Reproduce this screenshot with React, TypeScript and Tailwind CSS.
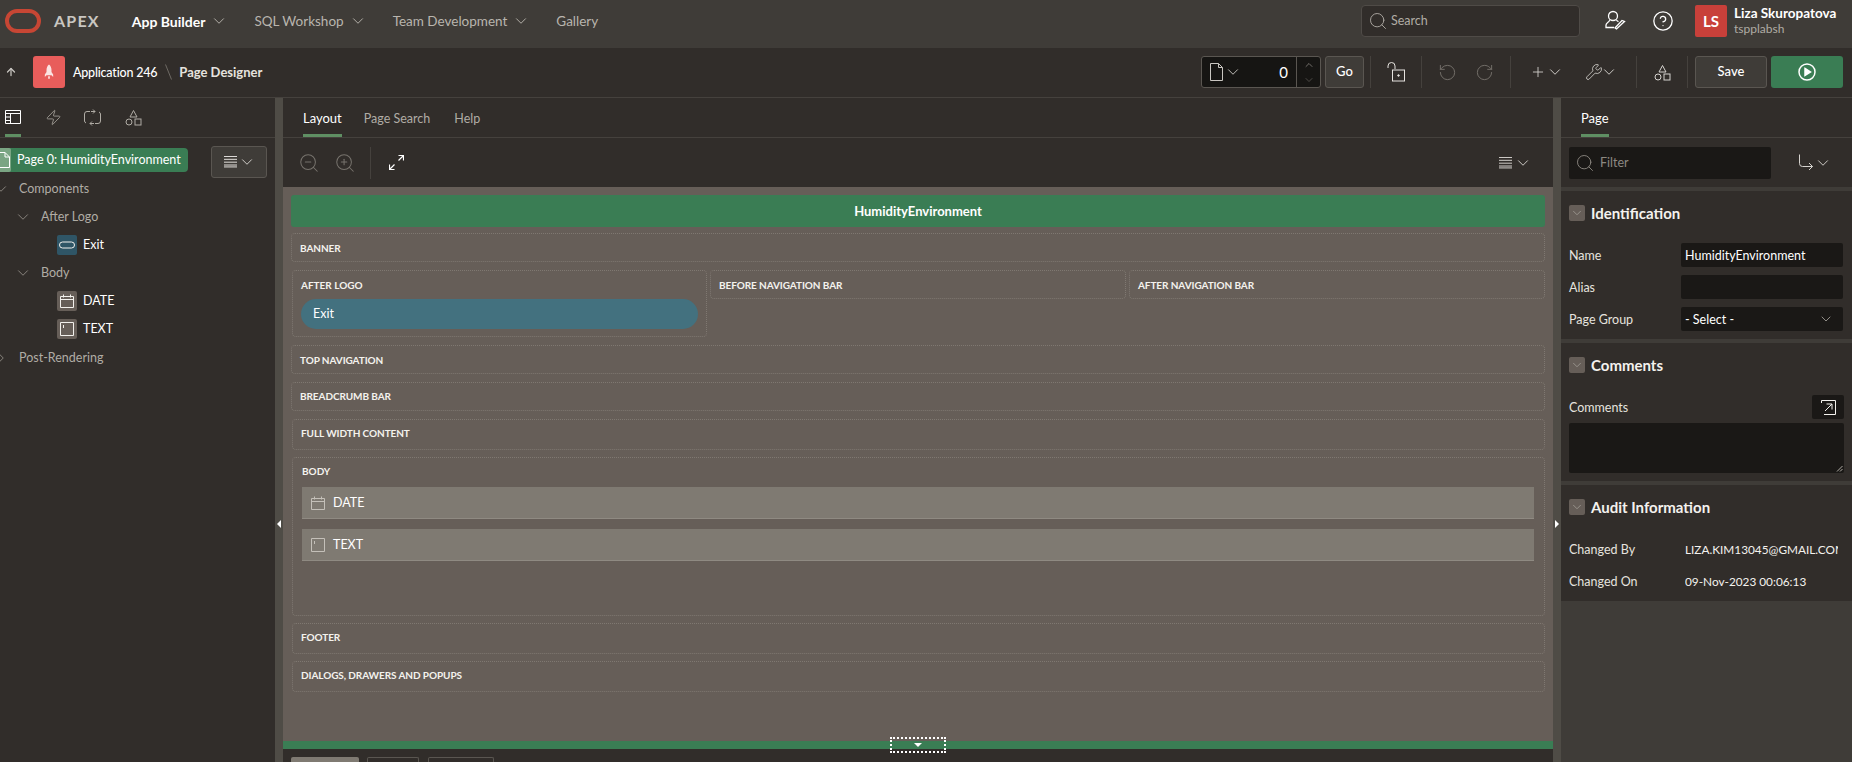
import {
  ChevronDown,
  ChevronUp,
  ArrowUp,
  Search,
  Zap,
  RotateCcw,
  RotateCw,
  Plus,
  Wrench,
  ZoomIn,
  ZoomOut,
  CircleHelp,
} from "lucide-react";

function Chevron({ className = "text-[#d6d3cf]", size = 18 }: { className?: string; size?: number }) {
  return <ChevronDown size={size} strokeWidth={1.25} className={className} />;
}

function MenuLines({ className = "" }: { className?: string }) {
  return (
    <svg width="15" height="12" viewBox="0 0 15 12" className={className} stroke="currentColor" fill="none">
      <path d="M1 .5h13M1 3.500h13M1 6.500h13M1 9.500h13M1 11.500h13" transform="scale(1 .95)" />
    </svg>
  );
}

function ShapesIcon({ className = "" }: { className?: string }) {
  return (
    <svg width="17" height="17" viewBox="0 0 17 17" fill="none" stroke="currentColor" className={className}>
      <path d="M8.500 1.500 12 8H5z" />
      <circle cx="4" cy="13" r="3" />
      <rect x="10" y="10" width="6" height="6" />
    </svg>
  );
}

function NavItem({ label, active, chevron = true, className = "" }: { label: string; active?: boolean; chevron?: boolean; className?: string }) {
  return (
    <div className={`flex items-center gap-[5px] ${active ? "text-[14px] font-bold text-white" : "text-[13.5px] text-[#b9b5ae]"} ${className}`}>
      <span>{label}</span>
      {chevron && <Chevron className="text-[#b9b5ae]" />}
    </div>
  );
}

function TabItem({ label, active, className = "" }: { label: string; active?: boolean; className?: string }) {
  return (
    <div className={`flex h-full items-center border-b-[3px] ${active ? "border-[#5f8f63] pt-[5px] text-[13px] text-white" : "border-transparent pt-[6px] text-[12.5px] text-[#b0aca5]"} ${className}`}>
      {label}
    </div>
  );
}

function Divider({ className = "" }: { className?: string }) {
  return <div className={`h-8 w-px bg-[#45413d] ${className}`} />;
}

function TopBar() {
  return (
    <header className="flex h-12 shrink-0 items-center bg-[#3f3c38] pb-[6px]">
      <svg width="36" height="24" viewBox="0 0 36 24" fill="none" className="ml-[5px]">
        <rect x="2" y="2" width="32" height="20" rx="10" stroke="#c74634" strokeWidth="4" />
      </svg>
      <span className="ml-[13px] text-[16px] font-bold tracking-[1.2px] text-[#c9c6c1]">APEX</span>
      <NavItem label="App Builder" active className="ml-[32px]" />
      <NavItem label="SQL Workshop" className="ml-[26px]" />
      <NavItem label="Team Development" className="ml-[26px]" />
      <NavItem label="Gallery" chevron={false} className="ml-[26px]" />
      <div className="ml-auto flex h-8 w-[219px] items-center gap-[3px] rounded-[4px] border border-[#4f4b47] bg-[#312d2a] pl-[6px] text-[12.5px] text-[#b0aca5]">
        <Search size={20} strokeWidth={1.1} />
        <span className="pt-[1px]">Search</span>
      </div>
      <svg width="22" height="22" viewBox="0 0 22 22" fill="none" stroke="#fff" strokeWidth="1.3" className="ml-[24px]">
        <circle cx="9" cy="6" r="4.500" />
        <path d="M5.500 10c.5 2-3.500 2.500-3.500 5v2.500h8M12.500 10c.3.8 1 1.200 2 1.600" />
        <path d="M20.500 11.500l-8 7.500-1.500-1 7-7.500z" />
      </svg>
      <CircleHelp size={22} strokeWidth={1.4} className="ml-[26px] text-white" />
      <div className="ml-[21px] flex h-8 w-8 items-center justify-center rounded-[2px] bg-[#c8403a] text-[15px] font-bold text-white">LS</div>
      <div className="ml-[7px] mr-[15px] flex w-[103px] flex-col leading-[16px]">
        <span className="text-[13.5px] font-bold whitespace-nowrap text-white">Liza Skuropatova</span>
        <span className="text-[12px] text-[#b0aca5]">tspplabsh</span>
      </div>
    </header>
  );
}

function SecondBar() {
  return (
    <div className="flex h-[50px] shrink-0 items-center border-b border-[#45413d] bg-[#312d2a] pb-[1px]">
      <ArrowUp size={12} strokeWidth={2.5} className="ml-[5px] text-[#c9c6c1]" />
      <div className="ml-[16px] flex h-8 w-8 items-center justify-center rounded-[3px] bg-[#e85d5b]">
        <svg width="10" height="16" viewBox="0 0 12 18" fill="#fbe3e2">
          <path d="M6 0c2 1.500 3 4 3 7v6H3V7c0-3 1-5.500 3-7zM3 9l-2 3v3l2-2zM9 9l2 3v3l-2-2zM5 14h2v3H5z" />
        </svg>
      </div>
      <span className="ml-2 pt-[2px] text-[12.5px] font-medium tracking-[-0.2px] text-white">Application 246</span>
      <svg width="7" height="16" viewBox="0 0 7 16" stroke="#6e6a65" className="ml-2">
        <path d="M.5.500l6 15" />
      </svg>
      <span className="ml-[7px] pt-[2px] text-[13px] font-bold text-[#e6e3df]">Page Designer</span>

      <div className="ml-auto flex items-center">
        <div className="flex h-8 w-[120px] items-center rounded-[3px] border border-[#5a5651] bg-[#161513] text-white">
          <svg width="13" height="18" viewBox="0 0 13 18" fill="none" stroke="#c9c6c1" className="ml-2">
            <path d="M.5.500h8l4 4v13H.5zM8.500.500v4h4" />
          </svg>
          <Chevron className="ml-px text-[#c9c6c1]" />
          <span className="ml-auto mr-[8px] text-[15px]">0</span>
          <div className="flex h-full w-[24px] flex-col items-center justify-center gap-[3px] border-l border-[#5a5651]">
            <ChevronUp size={12} strokeWidth={1.25} className="text-[#a8a49d]" />
            <ChevronDown size={12} strokeWidth={1.25} className="text-[#6e6a65]" />
          </div>
        </div>
        <div className="ml-1 flex h-8 w-[39px] items-center justify-center rounded-[3px] border border-[#5a5651] bg-[#3f3c38] text-[13px] font-medium text-white">Go</div>
        <Divider className="ml-[6px]" />
        <svg width="18" height="20" viewBox="0 0 18 20" fill="none" stroke="#e6e3df" className="ml-[16px]">
          <path d="M1 6V4a3.500 3.500 0 0 1 7 0v3" />
          <rect x="5.500" y="8" width="12" height="11" />
          <circle cx="11.500" cy="13.500" r=".8" fill="#e6e3df" />
        </svg>
        <Divider className="ml-[16px]" />
        <RotateCcw size={19} strokeWidth={1.1} className="ml-[16px] text-[#7b7771]" />
        <RotateCw size={19} strokeWidth={1.1} className="ml-[18px] text-[#7b7771]" />
        <Divider className="ml-[16px]" />
        <Plus size={16} strokeWidth={1.3} className="ml-[19px] text-[#d6d3cf]" />
        <Chevron />
        <Wrench size={18} strokeWidth={1.1} className="ml-[21px] text-[#d6d3cf]" />
        <Chevron className="-ml-[3px] text-[#d6d3cf]" />
        <Divider className="ml-[18px]" />
        <ShapesIcon className="ml-[17px] text-[#d6d3cf]" />
        <Divider className="ml-[16px]" />
        <div className="ml-[7px] flex h-8 w-[72px] items-center justify-center rounded-[3px] border border-[#5a5651] bg-[#3f3c38] text-[13px] font-medium text-white">Save</div>
        <div className="ml-1 mr-[9px] flex h-8 w-[72px] items-center justify-center rounded-[3px] bg-[#3a7d54]">
          <svg width="18" height="18" viewBox="0 0 18 18" fill="none" stroke="#fff" strokeWidth="1.5">
            <circle cx="9" cy="9" r="8" />
            <path d="M7 5.500 12.500 9 7 12.500z" fill="#fff" />
          </svg>
        </div>
      </div>
    </div>
  );
}

function TreeRow({ label, indent, top, chevron, icon, strong }: { label: string; indent: number; top: number; chevron?: "down" | "right"; icon?: React.ReactNode; strong?: boolean }) {
  return (
    <div className="relative flex h-6 items-center" style={{ marginTop: top, paddingLeft: indent }}>
      {chevron && (
        <span className="absolute top-[3px]" style={{ left: indent - 27.5 }}>
          <Chevron className={`text-[#8d8982] ${chevron === "right" ? "-rotate-90" : ""}`} />
        </span>
      )}
      {icon}
      <span className={`text-[12.5px] ${strong ? "text-white" : "text-[#b0aca5]"} ${icon ? "ml-[6px]" : ""}`}>{label}</span>
    </div>
  );
}

function TreeIcon({ bg, children }: { bg: string; children: React.ReactNode }) {
  return (
    <span className={`flex h-5 w-5 items-center justify-center rounded-[2px] ${bg}`}>
      <svg width="16" height="16" viewBox="0 0 16 16" fill="none" stroke="#f2f0ec">
        {children}
      </svg>
    </span>
  );
}

function CalendarPaths() {
  return <path d="M1.500 3.500h13v11h-13zM1.500 6.500h13M4.500 1.500v3M11.500 1.500v3" />;
}

function TextPaths() {
  return <path d="M1.500 1.500h13v13h-13zM4.500 4v3" />;
}

function LeftPanel() {
  return (
    <aside className="flex w-[275px] shrink-0 flex-col bg-[#312d2a]">
      <div className="flex h-10 shrink-0 items-end border-b border-[#45413d]">
        <div className="ml-[5px] flex h-full w-4 items-center border-b-[3px] border-[#5f8f63] pt-[2px]">
          <svg width="16" height="14" viewBox="0 0 16 14" fill="none" stroke="#fff">
            <path d="M.5.500h15v13H.5zM.5 3.500h15M5.500 3.500v10M.5 7h5M.5 10.500h5" />
          </svg>
        </div>
        <div className="ml-[24px] flex h-full items-center">
          <Zap size={17} strokeWidth={1.1} className="text-[#b0aca5]" />
        </div>
        <div className="ml-[22px] flex h-full items-center">
          <svg width="17" height="17" viewBox="0 0 17 17" fill="none" stroke="#b0aca5">
            <path d="M6 2.500H3a2.500 2.500 0 0 0-2.500 2.500v7A2.500 2.500 0 0 0 2 14" />
            <path d="M11 14.500h3a2.500 2.500 0 0 0 2.500-2.500V5A2.500 2.500 0 0 0 15 3" />
            <path d="M9 .5 11 2.500 9 4.500M8 12.500 6 14.500 8 16.500" />
            <path d="M11 2.500H7M6 14.500h4" />
          </svg>
        </div>
        <div className="ml-6 flex h-full items-center">
          <ShapesIcon className="text-[#b0aca5]" />
        </div>
      </div>
      <div className="flex items-start pt-2">
        <div className="mt-[2px] flex h-6 w-[188px] items-center rounded-r-[4px] bg-[#3a7d54]">
          <span className="flex h-full w-[11px] items-center justify-end overflow-hidden rounded-r-[2px] bg-[#7aa583]">
            <svg width="11" height="16" viewBox="6 0 11 16" fill="none" stroke="#fff" className="shrink-0">
              <path d="M2 .5h9l4.500 4.500v10.500H2zM11 .5V5h4.500" />
            </svg>
          </span>
          <span className="ml-[6px] text-[12.5px] text-white">Page 0: HumidityEnvironment</span>
        </div>
        <div className="ml-[23px] flex h-8 w-[56px] items-center justify-center rounded-[3px] border border-[#5a5651] bg-[#3f3c38] text-[#e6e3df]">
          <MenuLines />
          <Chevron />
        </div>
      </div>
      <TreeRow label="Components" indent={19} top={-1} chevron="down" />
      <TreeRow label="After Logo" indent={41} top={4} chevron="down" />
      <TreeRow
        label="Exit"
        indent={57}
        top={4}
        strong
        icon={
          <TreeIcon bg="bg-[#2f5566]">
            <rect x=".5" y="5" width="15" height="6" rx="3" />
          </TreeIcon>
        }
      />
      <TreeRow label="Body" indent={41} top={4} chevron="down" />
      <TreeRow
        label="DATE"
        indent={57}
        top={4}
        strong
        icon={
          <TreeIcon bg="bg-[#665e58]">
            <CalendarPaths />
          </TreeIcon>
        }
      />
      <TreeRow
        label="TEXT"
        indent={57}
        top={4}
        strong
        icon={
          <TreeIcon bg="bg-[#665e58]">
            <TextPaths />
          </TreeIcon>
        }
      />
      <TreeRow label="Post-Rendering" indent={19} top={5} chevron="right" />
    </aside>
  );
}

function Splitter({ side }: { side: "left" | "right" }) {
  return (
    <div className="flex w-2 shrink-0 items-center justify-center bg-[#4f4c46] pt-[188px]">
      <span
        className={
          side === "left"
            ? "h-0 w-0 border-y-[4px] border-r-[4px] border-y-transparent border-r-white"
            : "h-0 w-0 border-y-[4px] border-l-[4px] border-y-transparent border-l-white"
        }
      />
    </div>
  );
}

function Region({ label, className = "" }: { label: string; className?: string }) {
  return (
    <div className={`rounded-[4px] border border-dotted border-[#7f7871] pl-2 text-[10px] leading-[14px] font-bold tracking-[-0.08px] text-[#f4f2ee] ${className}`}>
      {label}
    </div>
  );
}

function BodyItem({ label, children }: { label: string; children: React.ReactNode }) {
  return (
    <div className="flex h-8 items-center border-b border-[#8f8a82] bg-[#7f7a72] pl-2 text-[12.5px] text-white">
      <svg width="16" height="16" viewBox="0 0 16 16" fill="none" stroke="#c4c0b9">
        {children}
      </svg>
      <span className="ml-[7px] pt-[2px]">{label}</span>
    </div>
  );
}

function Canvas() {
  return (
    <div className="flex min-h-0 flex-1 flex-col bg-[#665e58] pt-2 pr-2 pl-2">
      <div className="flex h-8 shrink-0 items-center justify-center rounded-[3px] bg-[#3a7d54] pt-[2px] text-[13px] font-bold text-white">
        HumidityEnvironment
      </div>
      <Region label="BANNER" className="mt-[6px] h-[29px] pt-[7px]" />
      <div className="mt-2 ml-px flex h-[67px] gap-[3px]">
        <div className="w-[415px] rounded-[4px] border border-dotted border-[#7f7871] px-2 pt-[7px]">
          <div className="text-[10px] leading-[14px] font-bold text-[#f4f2ee]">AFTER LOGO</div>
          <div className="mt-[7px] flex h-[30px] items-center rounded-full bg-[#43717f] pt-[1px] pl-3 text-[12.5px] text-white">Exit</div>
        </div>
        <Region label="BEFORE NAVIGATION BAR" className="h-[29px] w-[416px] pt-[7px]" />
        <Region label="AFTER NAVIGATION BAR" className="h-[29px] w-[416px] pt-[7px]" />
      </div>
      <Region label="TOP NAVIGATION" className="mt-2 h-[29px] pt-[7px]" />
      <Region label="BREADCRUMB BAR" className="mt-2 h-[29px] pt-[6px]" />
      <Region label="FULL WIDTH CONTENT" className="mt-2 ml-px h-[31px] pt-[6px]" />
      <div className="mt-[7px] ml-px h-[159px] rounded-[4px] border border-dotted border-[#7f7871] pt-[6px] pr-[10px] pl-[9px]">
        <div className="text-[10px] leading-[14px] font-bold text-[#f4f2ee]">BODY</div>
        <div className="mt-[9px] flex flex-col gap-[10px]">
          <BodyItem label="DATE">
            <CalendarPaths />
          </BodyItem>
          <BodyItem label="TEXT">
            <TextPaths />
          </BodyItem>
        </div>
      </div>
      <Region label="FOOTER" className="mt-[7px] ml-px h-[31px] pt-[6px]" />
      <Region label="DIALOGS, DRAWERS AND POPUPS" className="mt-[7px] ml-px h-[31px] pt-[6px]" />
    </div>
  );
}

function CenterPanel() {
  return (
    <main className="flex min-w-0 flex-1 flex-col bg-[#312d2a]">
      <div className="flex h-10 shrink-0 items-end border-b border-[#45413d] pl-5">
        <TabItem label="Layout" active />
        <TabItem label="Page Search" className="ml-[22px]" />
        <TabItem label="Help" className="ml-[24px]" />
      </div>
      <div className="flex h-[49px] shrink-0 items-center pl-[15px] text-[#77736d]">
        <ZoomOut size={22} strokeWidth={1.1} />
        <ZoomIn size={22} strokeWidth={1.1} className="ml-[14px]" />
        <Divider className="ml-[14px]" />
        <svg width="15" height="15" viewBox="0 0 15 15" fill="none" stroke="#fff" strokeWidth="1.200" className="ml-[18px]">
          <path d="M9.500.5h5v5M14.500.5l-5 5M.5 9.500v5h5M.5 14.500l5-5" />
        </svg>
        <div className="ml-auto mr-[21px] flex items-center gap-px text-[#d6d3cf]">
          <MenuLines />
          <Chevron />
        </div>
      </div>
      <Canvas />
      <div className="relative h-2 shrink-0 bg-[#3a7d54]">
        <div className="absolute top-[-4px] left-[607px] flex h-4 w-[56px] items-center justify-center border-2 border-dotted border-white">
          <span className="h-0 w-0 border-x-[4px] border-t-[4px] border-x-transparent border-t-white" />
        </div>
      </div>
      <div className="flex h-[13px] shrink-0 items-end gap-[8px] overflow-hidden pl-2">
        <div className="h-[5px] w-[68px] rounded-t-[2px] bg-[#7f7a72]" />
        <div className="h-[5px] w-[52px] rounded-t-[2px] border border-b-0 border-[#5a5651]" />
        <div className="ml-px h-[5px] w-[66px] rounded-t-[2px] border border-b-0 border-[#5a5651]" />
      </div>
    </main>
  );
}

function SectionHead({ title, className = "" }: { title: string; className?: string }) {
  return (
    <div className={`flex h-4 items-center ${className}`}>
      <span className="flex h-4 w-4 items-center justify-center rounded-[2px] bg-[#665e58]">
        <Chevron size={14} className="text-[#a8a49d]" />
      </span>
      <span className="ml-[6px] text-[15px] leading-4 font-bold text-[#f4f2ee]">{title}</span>
    </div>
  );
}

function Field({ label, value, select, className = "" }: { label: string; value?: string; select?: boolean; className?: string }) {
  return (
    <div className={`flex h-6 items-center ${className}`}>
      <span className="w-[112px] pt-[2px] text-[12.5px] text-[#e6e3df]">{label}</span>
      <div className="flex h-full w-[162px] items-center justify-between rounded-[2px] bg-[#1a1816] pr-[9px] pl-[4px] text-[12.5px] text-white">
        <span className="pt-[2px]">{value}</span>
        {select && <Chevron size={16} className="text-[#a8a49d]" />}
      </div>
    </div>
  );
}

function ReadOnly({ label, value, className = "" }: { label: string; value: string; className?: string }) {
  return (
    <div className={`flex h-6 items-center ${className}`}>
      <span className="w-[116px] shrink-0 text-[12.5px] text-[#e6e3df]">{label}</span>
      <span className="w-[153px] overflow-hidden text-[11.8px] whitespace-nowrap text-[#f4f2ee]">{value}</span>
    </div>
  );
}

function RightPanel() {
  return (
    <aside className="flex w-[291px] shrink-0 flex-col bg-[#3f3c38]">
      <div className="flex h-10 shrink-0 items-end border-b border-[#45413d] bg-[#312d2a] pl-5">
        <TabItem label="Page" active />
      </div>
      <div className="flex h-[49px] shrink-0 items-center bg-[#312d2a] pl-2">
        <div className="flex h-8 w-[202px] items-center gap-[5px] rounded-[2px] bg-[#1a1816] pl-[6px] text-[12.5px] text-[#8d8982]">
          <Search size={20} strokeWidth={1.1} />
          <span className="pt-[2px]">Filter</span>
        </div>
        <svg width="15" height="18" viewBox="0 0 15 18" fill="none" stroke="#d6d3cf" className="ml-[28px]">
          <path d="M.5.500v9a3 3 0 0 0 3 3h10M10 9l3.500 3.500L10 16" />
        </svg>
        <Chevron />
      </div>
      <section className="mt-1 h-[148px] shrink-0 bg-[#312d2a] px-2 pt-[14px]">
        <SectionHead title="Identification" />
        <Field label="Name" value="HumidityEnvironment" className="mt-[22px]" />
        <Field label="Alias" className="mt-2" />
        <Field label="Page Group" value="- Select -" select className="mt-2" />
      </section>
      <section className="mt-1 h-[138px] shrink-0 bg-[#312d2a] px-2 pt-[14px]">
        <SectionHead title="Comments" />
        <div className="mt-[22px] flex h-6 items-center justify-between">
          <span className="pt-[3px] text-[12.5px] text-[#e6e3df]">Comments</span>
          <span className="flex h-6 w-8 items-center justify-center rounded-[2px] bg-[#1a1816]">
            <svg width="15" height="15" viewBox="0 0 15 15" fill="none" stroke="#f4f2ee">
              <path d="M.5 3V.5h14v14H3M4 11l7-7M5.500 4H11v5.500" />
            </svg>
          </span>
        </div>
        <div className="relative mt-1 h-[50px] rounded-[2px] bg-[#1a1816]">
          <svg width="7" height="7" viewBox="0 0 7 7" stroke="#b0aca5" className="absolute right-[1px] bottom-[1px]">
            <path d="M1 6.500 6.500 1M4 6.500 6.500 4" />
          </svg>
        </div>
      </section>
      <section className="mt-1 h-[116px] shrink-0 bg-[#312d2a] px-2 pt-[14px]">
        <SectionHead title="Audit Information" />
        <ReadOnly label="Changed By" value="LIZA.KIM13045@GMAIL.COM" className="mt-[23px]" />
        <ReadOnly label="Changed On" value="09-Nov-2023 00:06:13" className="mt-2" />
      </section>
    </aside>
  );
}

export default function App() {
  return (
    <div className="flex h-[762px] w-[1852px] flex-col overflow-hidden bg-[#312d2a] [font-family:Lato,'Noto_Sans',sans-serif]">
      <TopBar />
      <SecondBar />
      <div className="flex min-h-0 flex-1">
        <LeftPanel />
        <Splitter side="left" />
        <CenterPanel />
        <Splitter side="right" />
        <RightPanel />
      </div>
    </div>
  );
}
